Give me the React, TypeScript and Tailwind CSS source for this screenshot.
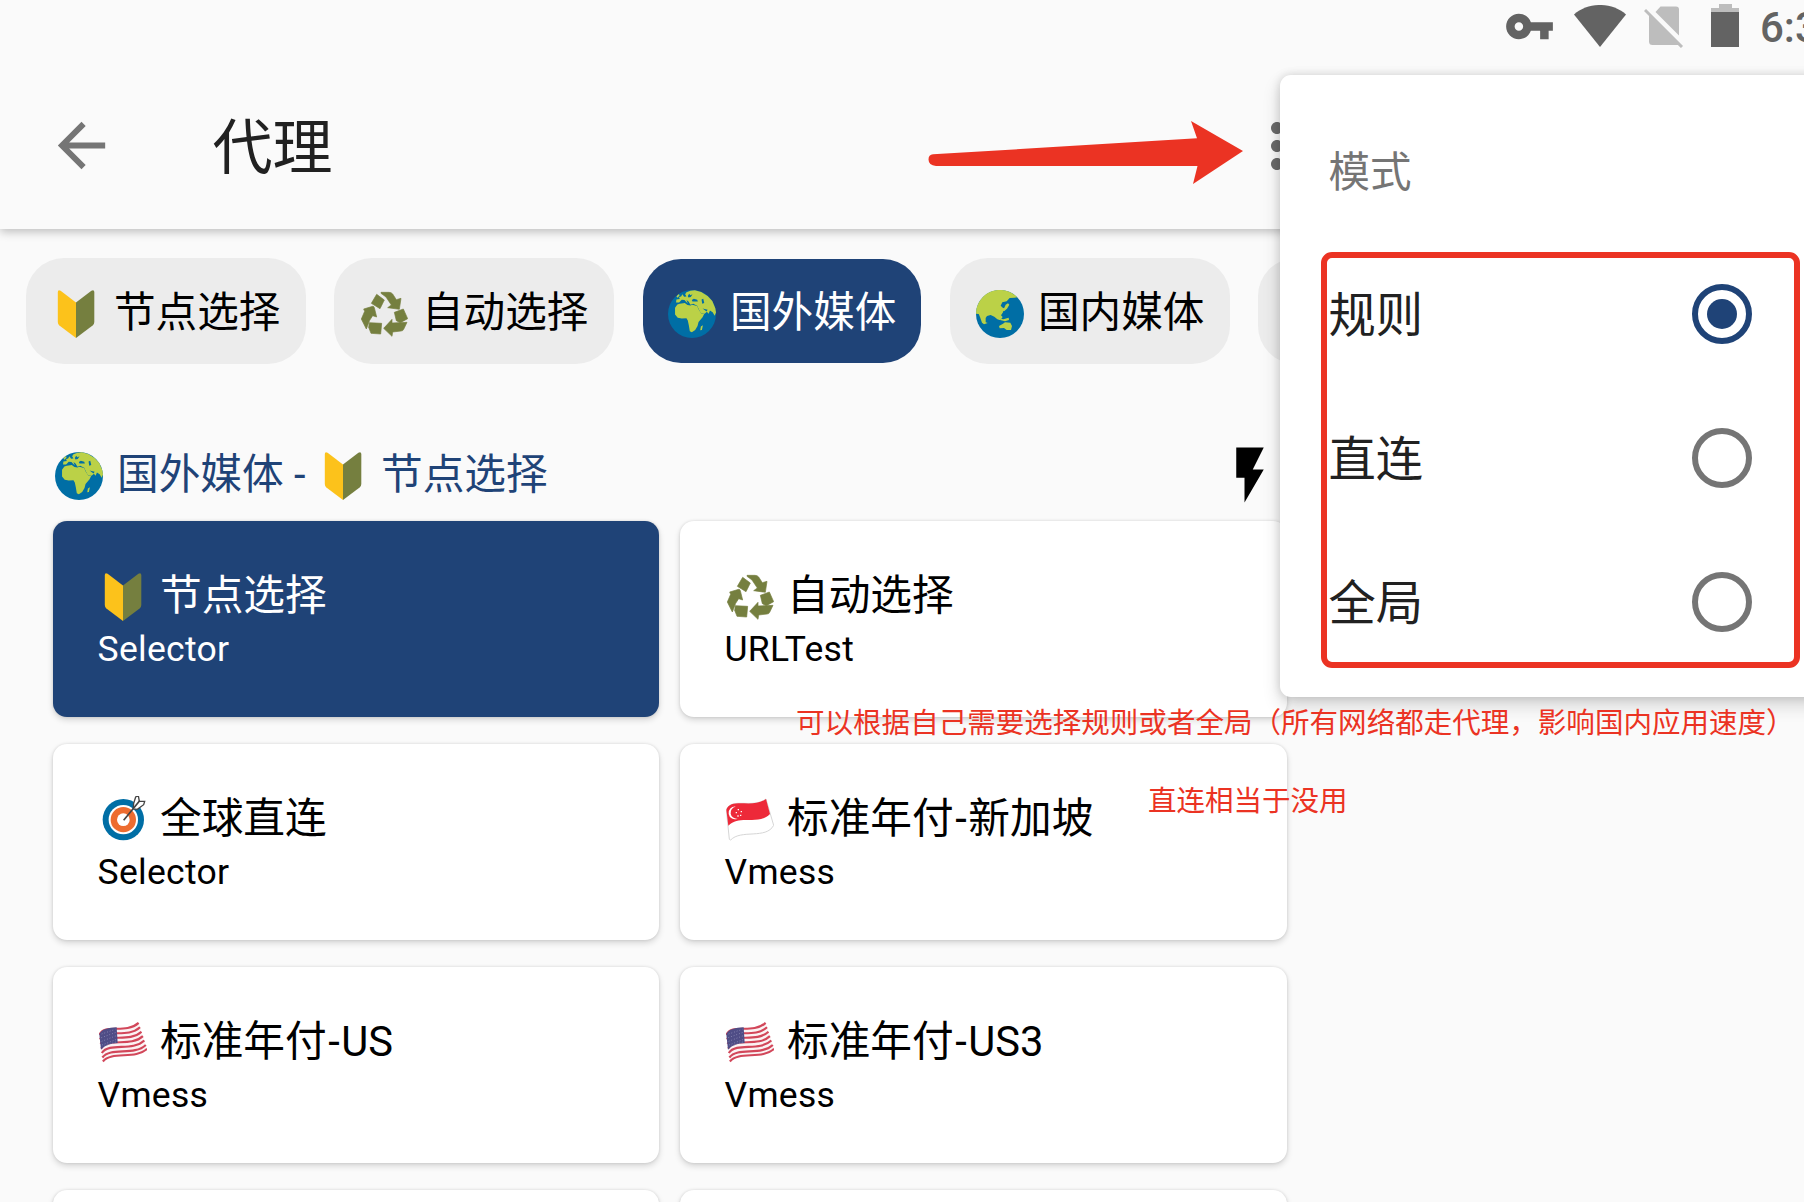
import type { ReactNode } from "react";

type EmojiName = "shield" | "recycle" | "africa" | "asia" | "target" | "sg" | "us";

const GREEN = "#757f3f";
const OCEAN = "#006ea5";
const LAND = "#bbd147";

function usStripe(t: number) {
  const mix = (a: number, b: number) => a + (b - a) * t;
  return `M${mix(57, 68)} ${mix(103, 188)} C${mix(72, 95)} ${mix(66, 155)} ${mix(134, 166)} ${mix(103, 184)} ${mix(174, 201)} ${mix(67, 150)}`;
}

const emojiArt: Record<EmojiName, { box: string; art: ReactNode }> = {
  shield: {
    box: "0 0 48 48",
    art: (
      <>
        <path fill="#fcc21b" d="M8.6.8 24 12.6V48L7.4 35.6Q5.8 34.2 5.8 32V2Q6-.8 8.6.8Z" />
        <path fill={GREEN} d="M39.4.8 24 12.6V48l16.6-12.4q1.7-1.4 1.7-3.6V2Q42-.8 39.4.8Z" />
      </>
    ),
  },
  recycle: {
    box: "120 150 144 144",
    art: (
      <g fill={GREEN} stroke={GREEN} strokeWidth="2" strokeLinejoin="round">
        <path d="M170 163 193 180 180 206 154 190Z" />
        <path d="M183 157H207Q214 157 218 162L229 179 243 175 238 208 203 203 214 195 198 171 183 160Z" />
        <path d="M131 207 158 199Q162 199 163 203L170 231 158 227 149 241 139 267 124 237 134 214Z" />
        <path d="M148 248 185 250 182 282 153 280 146 262Z" />
        <path d="M191 265 216 238V249L261 247 251 268Q249 273 243 273L218 276 216 289Z" />
        <path d="M223 217 250 207 263 236 241 248 229 242Z" />
      </g>
    ),
  },
  africa: {
    box: "25 27 143 143",
    art: (
      <>
        <circle cx="96.5" cy="98.5" r="71.5" fill={OCEAN} />
        <path
          fill={LAND}
          d="M46 80 53 70 60 68 75 66 83 72 92 73 97 71 112 75 116 84 124 97 133 98 128 108 116 122 113 134 106 146 96 153 90 150 87 132 84 118 80 111 66 112 54 110 46 100Z"
        />
        <path
          fill={LAND}
          d="M49 64 50 55 60 54 58 48 64 46 68 40 73 47 80 46 76 40 80 34 92 29 105 28 124 33 143 45 157 60 166 81 168 94 164 104 158 93 150 88 146 98 140 91 130 85 141 92 134 98 123 96 116 83 112 74 100 68 92 71 86 61 80 57 84 67 74 57 66 56 58 64Z"
        />
        <path fill={OCEAN} d="M96 57 102 53 112 56 114 61 98 61ZM125 55 130 53 133 66 127 68ZM84 45 88 38 92 43 98 40 93 48 86 49ZM128 82 143 86 140 91Z" />
        <path fill={LAND} d="M123 136 129 132 126 146 121 147ZM50 46 56 40 60 42 54 50Z" />
      </>
    ),
  },
  asia: {
    box: "229 600 144 144",
    art: (
      <>
        <circle cx="301" cy="672" r="72" fill={OCEAN} />
        <path
          fill={LAND}
          d="M229 671A72 72 0 0 1 353 622L344 623 330 624 321 634 308 637 303 647 311 655 310 667 304 676 309 681 302 691 293 688 284 680 273 675 262 678 258 684V697L264 699 253 703 247 698 241 681 237 672Z"
        />
        <path fill={LAND} d="M302 665 306 656 314 653 318 644 325 640 329 644 322 656 314 663Z" />
        <path fill={LAND} d="M303 686 311 688 327 683 328 690 316 694 304 691ZM298 708 310 701 316 697 332 698 337 708 334 720 321 720 313 714 300 715Z" />
      </>
    ),
  },
  target: {
    box: "56 50 144 144",
    art: (
      <>
        <circle cx="129" cy="121" r="62" fill={OCEAN} />
        <circle cx="129" cy="121" r="44" fill="#fff" />
        <circle cx="129" cy="121" r="38" fill="#ed6c30" />
        <circle cx="129" cy="121" r="19" fill="#fff" />
        <path d="M160 72 166 53 174 49 177 66 193 66 190 76 171 90 159 89Z" fill="#fff" stroke="#444" strokeWidth="4" />
        <path d="M130 123 178 64" stroke="#424242" strokeWidth="5" />
      </>
    ),
  },
  sg: {
    box: "170 709 144 144",
    art: (
      <>
        <path
          d="M171 750C186 712 250 748 290 718L313 797C290 840 215 808 184 841L180 839Z"
          fill="#fff"
          stroke="#d6d6d6"
          strokeWidth="3"
        />
        <path d="M171 750C186 712 250 748 290 718L302 763C265 800 212 762 177 798Z" fill="#ed2939" />
        <path d="M199 741A19 19 0 1 0 205 777A18 18 0 0 1 199 741Z" fill="#fff" />
        <path d="M205 748h4v4h-4zM214 754h4v4h-4zM199 757h4v4h-4zM204 767h4v4h-4zM212 765h4v4h-4z" fill="#fff" />
      </>
    ),
  },
  us: {
    box: "56 58 144 144",
    art: (
      <>
        <path d="M57 105C72 66 134 103 174 67L201 150C166 184 95 155 68 188Z" fill="#fbf3f4" />
        {[0.03, 0.19, 0.35, 0.51, 0.67, 0.83, 0.97].map((t) => (
          <path key={t} d={usStripe(t)} fill="none" stroke="#d2475a" strokeWidth="6.5" />
        ))}
        <path d="M57 104C63 88 86 84 109 83L112 130C92 131 76 135 62 150Z" fill="#4f4d86" />
        <path
          d="M64 103 105 89M63 114 107 98M64 125 108 108M65 136 109 119M72 140 106 127"
          stroke="#9795bd"
          strokeWidth="2.5"
          strokeDasharray="2.5 6"
        />
      </>
    ),
  },
};

function Emoji({ name }: { name: EmojiName }) {
  const { box, art } = emojiArt[name];
  return (
    <svg viewBox={box} className="size-12 shrink-0">
      {art}
    </svg>
  );
}

function Chip({ icon, label, active }: { icon: EmojiName; label: string; active?: boolean }) {
  return (
    <div
      className={`flex shrink-0 items-center gap-[14px] rounded-[38px] text-[41.6px] ${
        active
          ? "mr-px ml-px h-[104px] w-[278px] bg-[#1f4377] pl-[25px] text-white"
          : "h-[106px] w-[280px] bg-[#ececec] pl-[26px] text-black"
      }`}
    >
      <div className="pt-[6px]">
        <Emoji name={icon} />
      </div>
      <span className="pt-1 whitespace-nowrap">{label}</span>
    </div>
  );
}

function Card({ icon, name, kind, active }: { icon: EmojiName; name: string; kind: string; active?: boolean }) {
  const [base, region] = name.split("-");
  return (
    <div
      className={`h-[196px] rounded-[14px] pt-[46px] pl-[45.5px] shadow-[0_3px_6px_rgba(0,0,0,0.15),0_0_3px_rgba(0,0,0,0.12)] ${
        active ? "bg-[#1f4377] text-white" : "bg-white text-black"
      }`}
    >
      <div className="flex h-[56px] items-center gap-[13.5px] text-[41.7px]">
        <div className="pt-1">
          <Emoji name={icon} />
        </div>
        <span className="pt-0.5 whitespace-nowrap">
          {base}
          {region && (
            <>
              <span className="mx-[1.5px]">-</span>
              {region}
            </>
          )}
        </span>
      </div>
      <div className="-ml-px h-[50px] text-[35.5px] leading-[52px] tracking-[0.3px]">{kind}</div>
    </div>
  );
}

function Radio({ checked }: { checked?: boolean }) {
  return (
    <span
      className={`flex size-[60px] items-center justify-center rounded-full border-[6px] ${
        checked ? "border-[#1f4377]" : "border-[#757575]"
      }`}
    >
      {checked && <span className="size-[30px] rounded-full bg-[#1f4377]" />}
    </span>
  );
}

const cards: { icon: EmojiName; name: string; kind: string; active?: boolean }[] = [
  { icon: "shield", name: "节点选择", kind: "Selector", active: true },
  { icon: "recycle", name: "自动选择", kind: "URLTest" },
  { icon: "target", name: "全球直连", kind: "Selector" },
  { icon: "sg", name: "标准年付-新加坡", kind: "Vmess" },
  { icon: "us", name: "标准年付-US", kind: "Vmess" },
  { icon: "us", name: "标准年付-US3", kind: "Vmess" },
];

export default function App() {
  return (
    <div className="relative flex h-[1202px] w-[1804px] flex-col overflow-hidden bg-[#fafafa] font-['Roboto','Noto_Sans_CJK_SC',sans-serif] leading-none">
      <header className="relative h-[229px] shrink-0 bg-[#fafafa] shadow-[0_3px_9px_rgba(0,0,0,0.24)]">
        <div className="flex h-[62px] items-start pl-[1504px] text-[#636363]">
          <svg viewBox="0 0 24 24" className="mt-px size-[51px] shrink-0" fill="currentColor">
            <path d="M12.65 10C11.83 7.67 9.61 6 7 6c-3.31 0-6 2.69-6 6s2.69 6 6 6c2.61 0 4.83-1.67 5.65-4H17v4h4v-4h2v-4H12.65zM7 14c-1.1 0-2-.9-2-2s.9-2 2-2 2 .9 2 2-.9 2-2 2z" />
          </svg>
          <svg viewBox="0 0 52 42" className="mt-[5px] ml-[19px] h-[42px] w-[52px] shrink-0" fill="currentColor">
            <path d="M0 9.5C14-3.2 38-3.2 52 9.5L26 42Z" />
          </svg>
          <svg viewBox="0 0 40 42" className="mt-[6px] ml-[18px] h-[42px] w-10 shrink-0">
            <path fill="#bdbdbd" d="M16.5.5H32Q35 .5 35 3.5V29.5L11.5 6ZM5 9 35 39 32 39H8.500Q5 39 5 35.500Z" />
            <path stroke="#bdbdbd" strokeWidth="3" d="m1 4 37 37" />
          </svg>
          <div className="mt-1 ml-[27px] flex h-[43px] w-[28px] shrink-0 flex-col items-center">
            <span className="h-1 w-[13px] bg-[#bdbdbd]" />
            <span className="h-1 w-full bg-[#bdbdbd]" />
            <span className="w-full flex-1 bg-[#636363]" />
          </div>
          <span className="mt-[3px] ml-[21px] text-[42px] leading-[50px] font-medium">6:3</span>
        </div>
        <div className="flex h-[167px] items-start pl-[45.5px]">
          <svg viewBox="0 0 24 24" className="mt-12 size-[71px] shrink-0 fill-[#757575]">
            <path d="M20 11H7.830l5.590-5.590L12 4l-8 8 8 8 1.410-1.410L7.830 13H20v-2z" />
          </svg>
          <h1 className="mt-12 ml-[96px] w-[120px] text-[60px] leading-[78px] font-normal whitespace-nowrap text-[#212121]">代理</h1>
          <svg viewBox="0 0 24 24" className="mt-12 ml-[908.5px] size-[72px] shrink-0 fill-[#6b6b6b]">
            <path d="M12 8c1.100 0 2-.9 2-2s-.9-2-2-2-2 .9-2 2 .9 2 2 2zm0 2c-1.100 0-2 .9-2 2s.9 2 2 2 2-.9 2-2-.9-2-2-2zm0 6c-1.100 0-2 .9-2 2s.9 2 2 2 2-.9 2-2-.9-2-2-2z" />
          </svg>
        </div>
      </header>

      <nav className="flex items-center gap-[28px] pt-[29px] pl-[26px]">
        <Chip icon="shield" label="节点选择" />
        <Chip icon="recycle" label="自动选择" />
        <Chip icon="africa" label="国外媒体" active />
        <Chip icon="asia" label="国内媒体" />
        <div className="h-[106px] w-[280px] shrink-0 rounded-[38px] bg-[#ececec]" />
      </nav>

      <main className="w-[1287px] pl-[53px]">
        <div className="flex h-[157px] items-end justify-between pb-[13px]">
          <div className="mb-[7px] ml-[2px] flex h-[56px] items-center text-[41.700px] text-[#1f4377]">
            <div className="pt-[6px]">
              <Emoji name="africa" />
            </div>
            <span className="ml-[14px] w-[177px] pt-1 whitespace-nowrap">国外媒体</span>
            <span className="w-[25px] pt-1">-</span>
            <div className="pt-[6px]">
              <Emoji name="shield" />
            </div>
            <span className="ml-[14px] pt-1 whitespace-nowrap">节点选择</span>
          </div>
          <svg viewBox="0 0 24 24" className="mr-1 size-[66px] shrink-0 fill-black">
            <path d="M7 2v11h3v9l7-12h-4l4-8z" />
          </svg>
        </div>
        <div className="grid grid-cols-[606px_607px] gap-x-[21px] gap-y-[27px]">
          {cards.map((c, i) => (
            <Card key={i} {...c} />
          ))}
          <div className="h-[196px] rounded-[14px] bg-white shadow-[0_3px_6px_rgba(0,0,0,0.15),0_0_3px_rgba(0,0,0,0.12)]" />
          <div className="h-[196px] rounded-[14px] bg-white shadow-[0_3px_6px_rgba(0,0,0,0.15),0_0_3px_rgba(0,0,0,0.12)]" />
        </div>
      </main>

      <div className="absolute top-[75px] left-[1280px] flex h-[622px] w-[560px] flex-col rounded-[11px] bg-white pl-[48.500px] shadow-[0_8px_18px_rgba(0,0,0,0.16),0_0_10px_rgba(0,0,0,0.14)]">
        <div className="flex h-[167.500px] items-center pt-[27px] text-[41.500px] text-[#757575]">模式</div>
        {["规则", "直连", "全局"].map((label, i) => (
          <div key={label} className="flex h-[143.700px] w-[423.500px] items-center justify-between text-[47.300px] text-[#212121]">
            <span className="pt-[5px]">{label}</span>
            <Radio checked={i === 0} />
          </div>
        ))}
      </div>

      <div className="absolute top-[251.500px] left-[1320.500px] h-[416.500px] w-[479px] rounded-[11px] border-[6px] border-[#eb3323]" />
      <svg viewBox="0 0 320 70" className="absolute top-[118px] left-[926px] h-[70px] w-[320px] fill-[#eb3323]">
        <path d="M7 36.300 271 20.300 265 3 317 33 267 66 271.500 48H10Q2.500 47 2.500 41.500 2.500 36.500 7 36.300Z" />
      </svg>
      <p className="absolute top-[704px] left-[796px] text-[28.540px] leading-10 whitespace-nowrap text-[#eb3323]">
        可以根据自己需要选择规则或者全局（所有网络都走代理，影响国内应用速度）
      </p>
      <p className="absolute top-[782px] left-[1148px] text-[28.500px] leading-10 whitespace-nowrap text-[#eb3323]">
        直连相当于没用
      </p>
    </div>
  );
}
